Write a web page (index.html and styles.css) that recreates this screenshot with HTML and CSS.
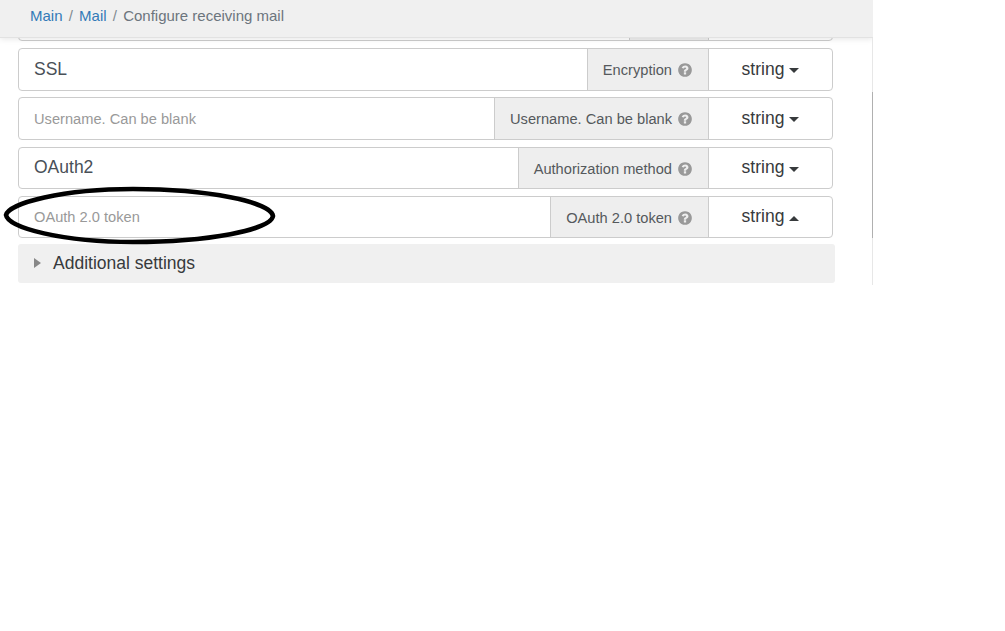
FILE: index.html
```html
<!DOCTYPE html>
<html lang="en">
<head>
<meta charset="utf-8">
<title>Configure receiving mail</title>
<link rel="stylesheet" href="styles.css">
</head>
<body>
<svg width="0" height="0" class="defs"><symbol id="q" viewBox="0 0 1792 1792"><path fill="currentColor" d="M1024 1376v-192q0-14-9-23t-23-9h-192q-14 0-23 9t-9 23v192q0 14 9 23t23 9h192q14 0 23-9t9-23zm256-672q0-88-55.5-163t-138.5-116-170-41q-243 0-371 213-15 24 8 42l132 100q7 6 19 6 16 0 25-12 53-68 86-92 34-24 86-24 48 0 85.5 26t37.5 59q0 38-20 61t-68 45q-63 28-115.5 86.5t-52.5 125.5v36q0 14 9 23t23 9h192q14 0 23-9t9-23q0-19 21.5-49.5t54.5-49.5q32-18 49-28.5t46-35 44.5-48 28-60.5 12.5-81zm384 192q0 209-103 385.5t-279.5 279.5-385.5 103-385.5-103-279.5-279.5-103-385.5 103-385.5 279.5-279.5 385.5-103 385.5 103 279.5 279.5 103 385.5z"/></symbol></svg>
<div class="window">
  <div class="content">
    <div class="row">
      <div class="field"></div>
      <div class="addon addon-top"></div>
      <div class="type"></div>
    </div>
    <div class="row">
      <div class="field value">SSL</div>
      <div class="addon">Encryption<svg class="help"><use href="#q"/></svg></div>
      <div class="type">string<span class="caret"></span></div>
    </div>
    <div class="row">
      <div class="field placeholder">Username. Can be blank</div>
      <div class="addon">Username. Can be blank<svg class="help"><use href="#q"/></svg></div>
      <div class="type">string<span class="caret"></span></div>
    </div>
    <div class="row">
      <div class="field value">OAuth2</div>
      <div class="addon">Authorization method<svg class="help"><use href="#q"/></svg></div>
      <div class="type">string<span class="caret"></span></div>
    </div>
    <div class="row">
      <div class="field placeholder">OAuth 2.0 token</div>
      <div class="addon">OAuth 2.0 token<svg class="help"><use href="#q"/></svg></div>
      <div class="type">string<span class="caret caret-up"></span></div>
    </div>
    <div class="additional"><span class="arrow"></span>Additional settings</div>
  </div>
  <nav class="crumbs">
    <a href="#">Main</a><span class="sep">/</span><a href="#">Mail</a><span class="sep">/</span><span class="current">Configure receiving mail</span>
  </nav>
  <div class="track"><div class="thumb"></div></div>
</div>
<svg class="circle" width="280" height="64" viewBox="0 0 280 64">
  <path d="M3 30 C6 18 60 4 130 4 C205 4 268 17 270 31 C268 45 205 57 130 57 C60 57 5 43 3 30 Z" fill="none" stroke="#000" stroke-width="4.6"/>
</svg>
</body>
</html>
```
FILE: styles.css
```css
* {
  box-sizing: border-box;
}

html, body {
  margin: 0;
  height: 100%;
  background: #fff;
  font-family: "Liberation Sans", Arial, sans-serif;
  font-size: 14.65px;
  color: #495057;
}

.defs {
  position: absolute;
}

.window {
  position: relative;
  width: 873px;
  height: 285px;
  overflow: hidden;
}

.content {
  display: flex;
  flex-direction: column;
  gap: 6.85px;
  margin-top: -1.2px;
  padding: 0 0 0 18px;
}

.row {
  display: flex;
  width: 815px;
  height: 42.45px;
  flex: none;
  border: 1px solid #ccc;
  border-radius: 4px;
  overflow: hidden;
}

.field {
  flex: 1;
  display: flex;
  align-items: center;
  padding: 0 15px;
}

.value {
  font-size: 17.5px;
  color: #495057;
}

.placeholder {
  color: #999;
}

.addon {
  display: flex;
  align-items: center;
  gap: 5px;
  padding: 1.4px 15px 0;
  background: #eee;
  border-left: 1px solid #ccc;
  border-right: 1px solid #ccc;
  color: #55595c;
  white-space: pre;
}

.addon-top {
  width: 80px;
}

.help {
  width: 16px;
  height: 16px;
  color: #999;
}

.type {
  width: 123px;
  display: flex;
  align-items: center;
  justify-content: center;
  gap: 5px;
  font-size: 17.5px;
  color: #373a3c;
  padding: 0 0 0.4px;
}

.caret {
  width: 0;
  height: 0;
  margin-top: 3px;
  border-left: 5px solid transparent;
  border-right: 5px solid transparent;
  border-top: 5px solid #373a3c;
}

.caret-up {
  border-top: 0;
  border-bottom: 5px solid #373a3c;
}

.additional {
  display: flex;
  align-items: center;
  width: 817px;
  height: 39px;
  flex: none;
  margin-top: -1.3px;
  padding: 0 0 0 16px;
  background: #f0f0f0;
  border-radius: 3px;
  font-size: 17.5px;
  color: #373a3c;
}

.arrow {
  width: 0;
  height: 0;
  margin-right: 12px;
  border-top: 5.5px solid transparent;
  border-bottom: 5.5px solid transparent;
  border-left: 7px solid #888;
}

.crumbs {
  position: absolute;
  top: 0;
  left: 0;
  right: 0;
  height: 38px;
  display: flex;
  align-items: center;
  padding: 0 0 6px 30px;
  background: #f0f0f0;
  box-shadow: 0 1px 6px rgba(0, 0, 0, 0.1);
  border-bottom: 1px solid #e2e2e2;
  font-size: 15px;
}

.crumbs a {
  color: #337ab7;
  text-decoration: none;
}

.sep {
  padding: 0 6.2px;
  color: #818a91;
}

.current {
  color: #6c757d;
}

.track {
  position: absolute;
  top: 38px;
  right: 0;
  bottom: 0;
  width: 1px;
  background: #e7e7e7;
}

.thumb {
  margin-top: 54px;
  height: 146px;
  background: #b0b0b0;
}

.circle {
  position: absolute;
  top: 185px;
  left: 3px;
}
```
